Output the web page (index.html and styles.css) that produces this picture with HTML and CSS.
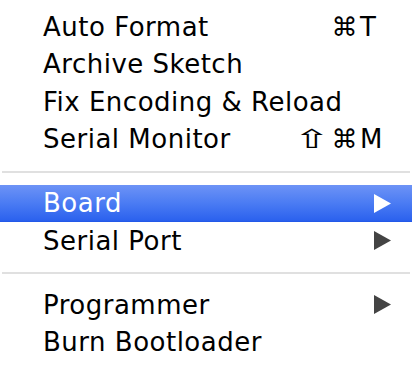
FILE: index.html
```html
<!DOCTYPE html>
<html lang="en">
<head>
    <meta charset="UTF-8">
    <title>Tools menu</title>
    <link rel="stylesheet" href="styles.css">
</head>
<body>
    <div class="menu">
        <div class="item">
            <span class="label">Auto Format</span>
            <span class="mods">⌘</span><span class="key">T</span>
        </div>
        <div class="item">
            <span class="label">Archive Sketch</span>
        </div>
        <div class="item">
            <span class="label">Fix Encoding &amp; Reload</span>
        </div>
        <div class="item">
            <span class="label">Serial Monitor</span>
            <span class="mods"><span class="shift">⇧</span>⌘</span><span class="key">M</span>
        </div>

        <div class="separator"></div>

        <div class="item selected">
            <span class="label">Board</span>
            <svg class="arrow" width="17" height="19" viewBox="0 0 17 19"><polygon points="0,0 17,9.5 0,19"/></svg>
        </div>
        <div class="item">
            <span class="label">Serial Port</span>
            <svg class="arrow" width="17" height="19" viewBox="0 0 17 19"><polygon points="0,0 17,9.5 0,19"/></svg>
        </div>

        <div class="separator"></div>

        <div class="item">
            <span class="label">Programmer</span>
            <svg class="arrow" width="17" height="19" viewBox="0 0 17 19"><polygon points="0,0 17,9.5 0,19"/></svg>
        </div>
        <div class="item">
            <span class="label">Burn Bootloader</span>
        </div>
    </div>
</body>
</html>
```

FILE: styles.css
```css
html, body {
    margin: 0;
    padding: 0;
    background: #fff;
    font-family: "DejaVu Sans", Verdana, sans-serif;
}
.menu {
    padding-top: 8px;
}
.item {
    display: flex;
    align-items: center;
    height: 37.5px;
    padding: 0 21px 0 43px;
    font-size: 26px;
    letter-spacing: 0.5px;
    color: #000;
}
.label {
    flex: 1;
    white-space: nowrap;
}
.mods {
    text-align: right;
    padding-right: 2px;
}
.shift {
    display: inline-block;
    transform: scaleX(1.7);
    margin: 0 8px 0 6px;
}
.key {
    width: 31px;
}
.arrow {
    fill: #444;
}
.selected {
    color: #fff;
    background: linear-gradient(to bottom, #6d93f6 0%, #4a7bf3 50%, #2c62ee 95%, #1f55e6 100%);
}
.selected .arrow {
    fill: #fff;
}
.separator {
    height: 2px;
    margin: 12.5px 2px 12px 2px;
    background: #e0e0e0;
}
```
